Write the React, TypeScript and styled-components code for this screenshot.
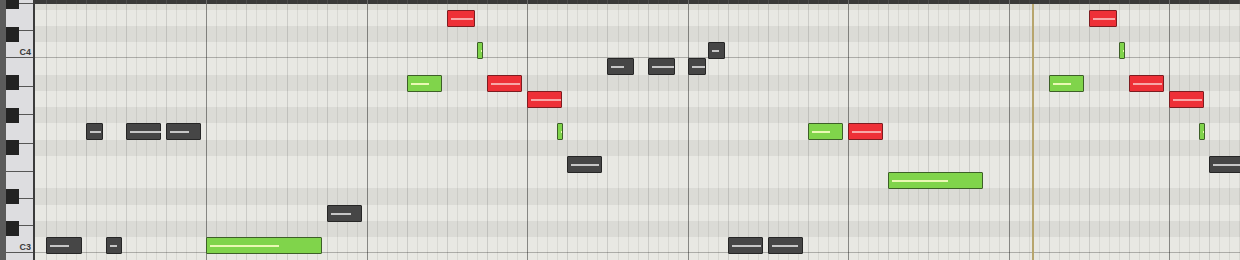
import React from 'react';
import styled, { createGlobalStyle } from 'styled-components';

// geometry of the roll, page pixels
const ROW = 16.25;
const C4_TOP = 42;
const KEYS_W = 35;
const RULER_H = 4;
const STEP = 10.03; // one sixteenth
const ORIGIN = 45.8; // first visible sixteenth line
const TOP_PITCH = 11; // B4, in semitones from C4
const LANE_COUNT = 36;
const PLAYHEAD_X = 1032;

const BLACK = [1, 3, 6, 8, 10];
const isBlack = (p: number) => BLACK.includes(((p % 12) + 12) % 12);
const stepX = (k: number) => Math.round(ORIGIN + STEP * k) - KEYS_W;
const laneTop = (p: number) => C4_TOP - p * ROW;

type Kind = 'dark' | 'red' | 'green';

const NOTE_COLORS: Record<Kind, { fill: string; edge: string; line: string }> = {
  dark: { fill: '#464646', edge: '#262626', line: '#c6c6c6' },
  red: { fill: '#ee3037', edge: '#7d1c20', line: '#f7a7a7' },
  green: { fill: '#80d44b', edge: '#3d5f28', line: '#eaf8b4' },
};

// [pitch from C4, start sixteenth, width px, kind, velocity line px]
const NOTES: [number, number, number, Kind, number][] = [
  [2, 40, 28, 'red', 22],
  [2, 104, 28, 'red', 22],
  [0, 43, 6, 'green', 1],
  [0, 66, 17, 'dark', 7],
  [0, 107, 6, 'green', 1],
  [-1, 56, 27, 'dark', 13],
  [-1, 60, 27, 'dark', 22],
  [-1, 64, 18, 'dark', 13],
  [-2, 36, 35, 'green', 18],
  [-2, 44, 35, 'red', 29],
  [-2, 100, 35, 'green', 18],
  [-2, 108, 35, 'red', 29],
  [-3, 48, 35, 'red', 30],
  [-3, 112, 35, 'red', 29],
  [-5, 4, 17, 'dark', 11],
  [-5, 8, 35, 'dark', 31],
  [-5, 12, 35, 'dark', 19],
  [-5, 51, 6, 'green', 1],
  [-5, 76, 35, 'green', 18],
  [-5, 80, 35, 'red', 29],
  [-5, 115, 6, 'green', 1],
  [-7, 52, 35, 'dark', 28],
  [-7, 116, 40, 'dark', 28],
  [-8, 84, 95, 'green', 56],
  [-10, 28, 35, 'dark', 20],
  [-12, 0, 36, 'dark', 19],
  [-12, 6, 16, 'dark', 7],
  [-12, 16, 116, 'green', 69],
  [-12, 68, 35, 'dark', 29],
  [-12, 72, 35, 'dark', 26],
];

// white keys of one octave, top to bottom
const WHITE_KEYS: { name: string; h: number }[] = [
  { name: 'B', h: 113.75 / 4 },
  { name: 'A', h: 113.75 / 4 },
  { name: 'G', h: 113.75 / 4 },
  { name: 'F', h: 113.75 / 4 },
  { name: 'E', h: 81.25 / 3 },
  { name: 'D', h: 81.25 / 3 },
  { name: 'C', h: 81.25 / 3 },
];
// black key rows counted from the top of the octave (B = 0)
const BLACK_ROWS = [1, 3, 5, 8, 10];
const OCTAVES = [4, 3, 2];

const GlobalStyle = createGlobalStyle`
  html, body {
    margin: 0;
    padding: 0;
    background: #e8e8e3;
    overflow: hidden;
  }
  body {
    font-family: "Liberation Sans", Arial, sans-serif;
  }
`;

const Roll = styled.div`
  display: flex;
  width: 1240px;
  height: 260px;
  overflow: hidden;
`;

const Keyboard = styled.div`
  flex: none;
  width: ${KEYS_W}px;
  box-sizing: border-box;
  padding-left: 6px;
  background: #5b5b5b;
  border-right: 2px solid #3c3c3c;
  overflow: hidden;
`;

const KeyStack = styled.div`
  display: flex;
  flex-direction: column;
  margin-top: ${C4_TOP - TOP_PITCH * ROW}px;
`;

const Octave = styled.div`
  position: relative;
  display: flex;
  flex-direction: column;
`;

const WhiteKey = styled.div<{ $h: number }>`
  flex: none;
  height: ${(p) => p.$h}px;
  box-sizing: border-box;
  display: flex;
  align-items: flex-end;
  justify-content: flex-end;
  padding: 0 2px 0 0;
  background: #dddde0;
  border-bottom: 1px solid #565656;
`;

const KeyLabel = styled.span`
  font-size: 9px;
  line-height: 9px;
  font-weight: 700;
  color: #3a3a3a;
`;

const BlackKey = styled.div<{ $row: number }>`
  position: absolute;
  left: 0;
  top: ${(p) => p.$row * ROW + 0.75}px;
  width: 13px;
  height: ${ROW - 1.25}px;
  background: #222222;
`;

const Grid = styled.div`
  flex: 1;
  display: flex;
  flex-direction: column;
  overflow: hidden;
`;

const Ruler = styled.div`
  position: relative;
  flex: none;
  height: ${RULER_H}px;
  background: #393939;
`;

const LaneArea = styled.div`
  position: relative;
  flex: 1;
  overflow: hidden;
`;

const Lanes = styled.div`
  display: flex;
  flex-direction: column;
  margin-top: ${C4_TOP - TOP_PITCH * ROW - RULER_H}px;
`;

const Lane = styled.div<{ $black: boolean; $octave: boolean }>`
  flex: none;
  height: ${ROW}px;
  box-sizing: border-box;
  background: ${(p) => (p.$black ? '#dbdbd6' : '#e8e8e3')};
  border-bottom: ${(p) => (p.$octave ? '1px solid #acaca8' : 'none')};
`;

const LineLayer = styled.svg`
  position: absolute;
  left: 0;
  top: 0;
  width: 100%;
  height: 100%;
  pointer-events: none;
`;

const Note = styled.div<{ $kind: Kind }>`
  position: absolute;
  height: 17px;
  box-sizing: border-box;
  border: 1px solid ${(p) => NOTE_COLORS[p.$kind].edge};
  border-radius: 1px;
  background: ${(p) => NOTE_COLORS[p.$kind].fill};
`;

const Velocity = styled.div<{ $kind: Kind }>`
  position: absolute;
  left: 2.5px;
  top: 6.5px;
  height: 2px;
  background: ${(p) => NOTE_COLORS[p.$kind].line};
`;

const Playhead = styled.div`
  position: absolute;
  top: 0;
  bottom: 0;
  left: ${PLAYHEAD_X - KEYS_W}px;
  width: 2px;
  background: #b7a56d;
`;

const lineLevel = (k: number) => (k > 0 && k % 16 === 0 ? 'bar' : k % 4 === 0 ? 'beat' : 'step');

const GridLines: React.FC<{ dark?: boolean }> = ({ dark }) => {
  const colors = dark
    ? { bar: '#6a6a6a', beat: '#4c4c4c', step: '#424242' }
    : { bar: 'rgba(0,0,0,0.42)', beat: 'rgba(0,0,0,0.12)', step: 'rgba(0,0,0,0.065)' };
  const lines = [];
  for (let k = 0; k < 120; k++) {
    lines.push(<rect key={k} x={stepX(k)} y={0} width={1} height="100%" fill={colors[lineLevel(k)]} />);
  }
  return <LineLayer>{lines}</LineLayer>;
};

const PianoKeys: React.FC = () => (
  <Keyboard>
    <KeyStack>
      {OCTAVES.map((oct) => (
        <Octave key={oct}>
          {WHITE_KEYS.map((k) => (
            <WhiteKey key={k.name} $h={k.h}>
              {k.name === 'C' && oct !== 2 && <KeyLabel>C{oct}</KeyLabel>}
            </WhiteKey>
          ))}
          {BLACK_ROWS.map((r) => (
            <BlackKey key={r} $row={r} />
          ))}
        </Octave>
      ))}
    </KeyStack>
  </Keyboard>
);

const App: React.FC = () => {
  const lanes = Array.from({ length: LANE_COUNT }, (_, i) => TOP_PITCH - i);
  return (
    <>
      <GlobalStyle />
      <Roll>
        <PianoKeys />
        <Grid>
          <Ruler>
            <GridLines dark />
          </Ruler>
          <LaneArea>
            <Lanes>
              {lanes.map((p) => (
                <Lane key={p} $black={isBlack(p)} $octave={((p % 12) + 12) % 12 === 0} />
              ))}
            </Lanes>
            <GridLines />
            <Playhead />
            {NOTES.map(([p, s, w, kind, vel], i) => (
              <Note
                key={i}
                $kind={kind}
                style={{ left: stepX(s), top: Math.round(laneTop(p)) - RULER_H, width: w }}
              >
                <Velocity $kind={kind} style={{ width: vel }} />
              </Note>
            ))}
          </LaneArea>
        </Grid>
      </Roll>
    </>
  );
};

export default App;
